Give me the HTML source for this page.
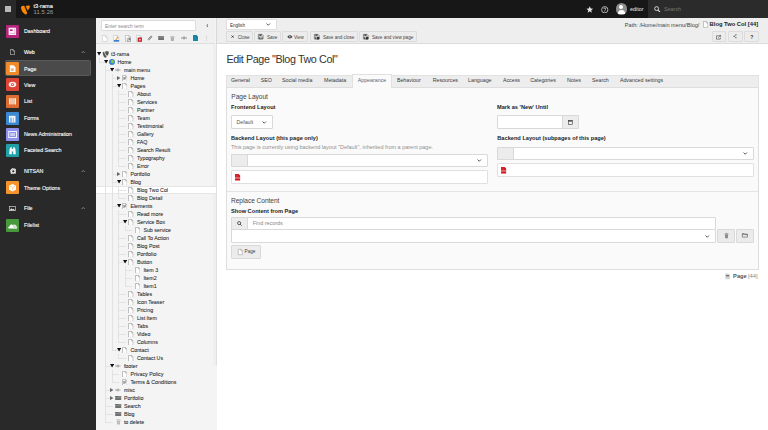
<!DOCTYPE html>
<html><head><meta charset="utf-8">
<style>
*{box-sizing:border-box;margin:0;padding:0}
html,body{width:768px;height:430px;overflow:hidden;background:#fff;font-family:"Liberation Sans",sans-serif;position:relative}
.a{position:absolute}
.t{position:absolute;white-space:nowrap;line-height:1}
#top{left:0;top:0;width:768px;height:18px;background:#171717}
#side{left:0;top:18px;width:96px;height:412px;background:#292929}
#tree{left:96px;top:18px;width:120px;height:412px;background:#f4f4f4}
#main{left:216px;top:18px;width:552px;height:412px;background:#fff}
.mi{position:absolute;left:6.3px;width:13px;height:13px;border-radius:1px}
.ml{position:absolute;left:24px;font-size:5.3px;color:#fff;white-space:nowrap;line-height:1;-webkit-text-stroke:0.1px #fff}
.row{position:absolute;left:0;width:119px;height:8px}
.tl{position:absolute;font-size:5.3px;color:#1a1a1a;white-space:nowrap;line-height:8px;top:0;-webkit-text-stroke:0.06px #333}
.tg{position:absolute;top:2.3px;width:0;height:0;border-left:2px solid transparent;border-right:2px solid transparent;border-top:3.2px solid #111}
.tgr{position:absolute;top:2.2px;width:0;height:0;border-top:1.8px solid transparent;border-bottom:1.8px solid transparent;border-left:2.8px solid #555}
.pi{position:absolute;top:1px;width:5px;height:6.2px;background:#fff;border:0.6px solid #8a8a8a}
.pi:after{content:"";position:absolute;right:-0.6px;top:-0.6px;width:1.8px;height:1.8px;background:#f3f3f3;border-left:0.6px solid #8a8a8a;border-bottom:0.6px solid #8a8a8a}
.btn{position:absolute;height:10.5px;background:#eaeaea;border:0.6px solid #c8c8c8;border-radius:1px}
.bt{position:absolute;font-size:4.6px;color:#333;white-space:nowrap;line-height:1}
.tab{position:absolute;font-size:5.3px;color:#333;white-space:nowrap;line-height:1;top:60.2px}
.lbl{position:absolute;font-size:5.65px;font-weight:bold;color:#222;white-space:nowrap;line-height:1}
.inp{position:absolute;background:#fff;border:0.6px solid #cfcfcf;border-radius:1px}
</style></head><body>

<svg width="0" height="0" style="position:absolute">
<defs>
<symbol id="pg" viewBox="0 0 10 13"><path d="M0.7 0.7 H6.3 L9.3 3.7 V12.3 H0.7 Z" fill="#fff" stroke="#8f8f8f" stroke-width="1.1"/><path d="M6.3 0.7 V3.7 H9.3" fill="none" stroke="#8f8f8f" stroke-width="0.9"/></symbol>
<symbol id="tgo" viewBox="0 0 8 8"><path d="M0.3 1.2 H7.7 L4 7.2 Z" fill="#111"/></symbol>
<symbol id="tgc" viewBox="0 0 8 8"><path d="M1.5 0.8 V7.2 L6.8 4 Z" fill="#555"/></symbol>
<symbol id="chev" viewBox="0 0 8 5"><path d="M1 1 L4 4 L7 1" fill="none" stroke="#333" stroke-width="1.3"/></symbol>
</defs></svg>
<!-- TOPBAR -->
<div id="top" class="a">
  <div class="a" style="left:0;top:0;width:16px;height:18px;background:#292929"></div>
  <div class="a" style="left:4.9px;top:5.9px;width:6px;height:6px;background:repeating-linear-gradient(#b8b8b8 0 1.1px,#8a8a8a 1.1px 1.5px)"></div>
  <svg class="a" style="left:20px;top:4.5px" width="11" height="10" viewBox="0 0 11 10"><path d="M0.9 2 Q1.6 0.8 4.2 0.7 L7.2 7.9 Q6.8 9.4 5.3 9.5 Q1.2 6.6 0.9 2 Z" fill="#ff8700"/><path d="M5.6 0.9 Q8.2 0.3 9.9 0.7 Q10.2 3.6 7.6 5.6 Z" fill="#ff8700"/></svg>
  <div class="t" style="left:33.5px;top:4.2px;font-size:5.6px;color:#fff;-webkit-text-stroke:0.12px #fff">t3-rama</div>
  <div class="t" style="left:33.5px;top:10.1px;font-size:5.8px;letter-spacing:0.15px;color:#a0a0a0">11.5.26</div>
  <svg class="a" style="left:586px;top:5.5px" width="7.5" height="7" viewBox="0 0 10 10"><path d="M5 0.3 L6.3 3.6 L9.8 3.8 L7.1 6 L8 9.6 L5 7.6 L2 9.6 L2.9 6 L0.2 3.8 L3.7 3.6 Z" fill="#e6e6e6"/></svg>
  <svg class="a" style="left:601px;top:5.5px" width="7.5" height="7.5" viewBox="0 0 10 10"><circle cx="5" cy="5" r="4.2" fill="none" stroke="#ddd" stroke-width="1"/><path d="M3.6 3.9 C3.6 2.3 6.4 2.3 6.4 3.9 C6.4 5 5 5 5 6.2" fill="none" stroke="#ddd" stroke-width="1"/><circle cx="5" cy="7.6" r="0.6" fill="#ddd"/></svg>
  <div class="a" style="left:615.5px;top:3.2px;width:11.6px;height:11.6px;border-radius:50%;background:#8d8d8d;overflow:hidden">
    <div class="a" style="left:3.9px;top:2.2px;width:3.8px;height:3.8px;border-radius:50%;background:#fff"></div>
    <div class="a" style="left:2.3px;top:6.6px;width:7px;height:4px;border-radius:3.5px 3.5px 0 0;background:#fff"></div>
  </div>
  <div class="t" style="left:630px;top:7.2px;font-size:5.4px;color:#e8e8e8">editor</div>
  <div class="a" style="left:648px;top:0;width:120px;height:18px;background:#2b2b2b"></div>
  <svg class="a" style="left:654px;top:6px" width="6.5" height="6.5" viewBox="0 0 10 10"><circle cx="4" cy="4" r="3" fill="none" stroke="#e0e0e0" stroke-width="1.4"/><path d="M6.2 6.2 L9.2 9.2" stroke="#e0e0e0" stroke-width="1.6"/></svg>
  <div class="t" style="left:664px;top:7.2px;font-size:5.4px;color:#777">Search</div>
</div>

<!-- SIDEBAR -->
<div id="side" class="a">
<div class="a" style="left:4.5px;top:42.00px;width:86.7px;height:15.8px;background:#4a4a4a;border:0.6px solid #5a5a5a;border-radius:1.5px"></div>
<div class="mi" style="top:6.80px;background:#b3267c"><svg class="a" style="left:0;top:0" width="13" height="13" viewBox="0 0 13 13"><rect x="2.6" y="2.7" width="7.5" height="7.3" fill="#fbeef6"/><rect x="4" y="4.4" width="2.6" height="1.6" fill="#b3267c"/><rect x="4" y="8" width="4.5" height="0.6" fill="#d98cbc"/><rect x="8.6" y="3.5" width="0.6" height="5.6" fill="#d98cbc"/></svg></div>
<div class="ml" style="top:11.40px">Dashboard</div>
<div class="mi" style="top:44.00px;background:#f08b2b"><svg class="a" style="left:0;top:0" width="13" height="13" viewBox="0 0 13 13"><path d="M3.8 3.2 H7.5 L9.5 5.2 V10 H3.8 Z" fill="#fff"/><rect x="4.8" y="6.3" width="3" height="2.8" fill="#f4b27a"/></svg></div>
<div class="ml" style="top:48.60px">Page</div>
<div class="mi" style="top:60.30px;background:#dc4437"><svg class="a" style="left:0;top:0" width="13" height="13" viewBox="0 0 13 13"><ellipse cx="6.5" cy="6.5" rx="3.8" ry="2.7" fill="#fbe9e7"/><circle cx="6.5" cy="6.5" r="1.5" fill="#e04a3e"/><circle cx="6.5" cy="6.5" r="0.6" fill="#fff"/></svg></div>
<div class="ml" style="top:64.90px">View</div>
<div class="mi" style="top:76.70px;background:#dc6c32"><svg class="a" style="left:0;top:0" width="13" height="13" viewBox="0 0 13 13"><rect x="3.3" y="3.2" width="6.6" height="6.2" fill="#f2c2a4"/><rect x="3.3" y="3.2" width="0.7" height="6.2" fill="#fff"/><rect x="9.2" y="3.2" width="0.7" height="6.2" fill="#fff"/></svg></div>
<div class="ml" style="top:81.30px">List</div>
<div class="mi" style="top:93.50px;background:#3d88d2"><svg class="a" style="left:0;top:0" width="13" height="13" viewBox="0 0 13 13"><path d="M3 3.8 H9.5 V10.5 H3 Z" fill="#eef5fc"/><rect x="4.5" y="5.6" width="1" height="4.9" fill="#3d8ad6"/><rect x="6.8" y="5.6" width="1.1" height="4.9" fill="#8fbde9"/></svg></div>
<div class="ml" style="top:98.10px">Forms</div>
<div class="mi" style="top:109.70px;background:#8e92ee"><svg class="a" style="left:0;top:0" width="13" height="13" viewBox="0 0 13 13"><rect x="2.7" y="3.5" width="7.8" height="6" fill="none" stroke="#f2f2fe" stroke-width="1"/><rect x="4.2" y="5" width="4.8" height="3" fill="#c9cbf7"/></svg></div>
<div class="ml" style="top:114.30px">News Administration</div>
<div class="mi" style="top:125.80px;background:#21a0a8"><svg class="a" style="left:0;top:0" width="13" height="13" viewBox="0 0 13 13"><path d="M3.6 5 L4.6 3.2 H5.8 V10.2 H3.2 Z M9.4 5 L8.4 3.2 H7.2 V10.2 H9.8 Z" fill="#fff"/><rect x="5.6" y="5" width="1.8" height="2.5" fill="#fff"/></svg></div>
<div class="ml" style="top:130.40px">Faceted Search</div>
<div class="mi" style="top:163.10px;background:#f4952b"><svg class="a" style="left:0;top:0" width="13" height="13" viewBox="0 0 13 13"><path d="M6.5 3 L10 4.8 V8.8 L6.5 10.5 L3 8.8 V4.8 Z" fill="#fff"/><path d="M3.6 5 L6.5 6.5 L9.4 5 M6.5 6.5 V9.6" fill="none" stroke="#f7c68d" stroke-width="0.7"/></svg></div>
<div class="ml" style="top:167.70px">Theme Options</div>
<div class="mi" style="top:200.50px;background:#4a983d"><svg class="a" style="left:0;top:0" width="13" height="13" viewBox="0 0 13 13"><path d="M3 9.6 C1.8 9.6 2 7.4 3.5 7.4 C3.8 5.4 6.2 5 7 6.2 C8 5.4 10.8 6 10.4 7.8 C11.6 8 11.4 9.6 10.3 9.6 Z" fill="#fff"/><path d="M7 6.2 V9.6 H10.3 C11.4 9.6 11.6 8 10.4 7.8 C10.8 6 8 5.4 7 6.2 Z" fill="#d2e6cc"/></svg></div>
<div class="ml" style="top:205.10px">Filelist</div>
<svg class="a" style="left:9.9px;top:31.10px" width="5" height="6.2" viewBox="0 0 10 12"><path d="M0.8 0.8 H6 L9.2 4 V11.2 H0.8 Z" fill="none" stroke="#e8e8e8" stroke-width="1.1"/><path d="M6 0.8 V4 H9.2" fill="none" stroke="#e8e8e8" stroke-width="0.9"/></svg>
<div class="ml" style="top:31.70px;color:#fff;-webkit-text-stroke:0.12px #fff">Web</div>
<svg class="a" style="left:81px;top:32.90px" width="4.4" height="2.6" viewBox="0 0 10 6"><path d="M1 5 L5 1 L9 5" fill="none" stroke="#bbb" stroke-width="1.4"/></svg>
<svg class="a" style="left:9.6px;top:149.70px" width="6.6" height="6.6" viewBox="0 0 10 10"><circle cx="5" cy="5" r="4.1" fill="none" stroke="#f4f4f4" stroke-width="1.8" stroke-dasharray="1.4 0.75"/><circle cx="5" cy="5" r="2.7" fill="none" stroke="#f4f4f4" stroke-width="1.9"/></svg>
<div class="ml" style="top:151.30px;color:#fff;-webkit-text-stroke:0.12px #fff">NITSAN</div>
<svg class="a" style="left:81px;top:151.70px" width="4.4" height="2.6" viewBox="0 0 10 6"><path d="M1 5 L5 1 L9 5" fill="none" stroke="#bbb" stroke-width="1.4"/></svg>
<svg class="a" style="left:9.3px;top:188.00px" width="6.6" height="5.2" viewBox="0 0 13 10"><rect x="0.6" y="0.6" width="11.8" height="8.8" fill="none" stroke="#e6e6e6" stroke-width="1.2"/><path d="M1 9 L4.8 4.2 L7.5 6.8 L9 5.5 L12 9 Z" fill="#e6e6e6"/></svg>
<div class="ml" style="top:188.30px;color:#fff;-webkit-text-stroke:0.12px #fff">File</div>
<svg class="a" style="left:81px;top:189.20px" width="4.4" height="2.6" viewBox="0 0 10 6"><path d="M1 5 L5 1 L9 5" fill="none" stroke="#bbb" stroke-width="1.4"/></svg>
</div>
<!-- TREE -->
<div id="tree" class="a">
<div class="a" style="left:0;top:0;width:119px;height:26px;background:#f0f0f0;border-bottom:1px solid #dedede"></div>
<div class="a" style="left:5px;top:2px;width:95px;height:11px;background:#fff;border:1px solid #dcdcdc;border-radius:1px"></div>
<div class="t" style="left:9px;top:7px;font-size:4.9px;color:#8a8a8a">Enter search term</div>
<svg class="a" style="left:109.6px;top:6.2px" width="2.6" height="3.2" viewBox="0 0 4 6"><path d="M3.4 0.6 L0.9 3 L3.4 5.4" fill="none" stroke="#333" stroke-width="1.4"/></svg>
<svg class="a" style="left:6.10px;top:16.50px" width="5.6" height="7.1" viewBox="0 0 10 12"><path d="M0.7 0.7 H6.3 L9.3 3.7 V11.3 H0.7 Z" fill="#fff" stroke="#b8b8b8" stroke-width="0.9"/><path d="M6.3 0.7 V3.7 H9.3" fill="none" stroke="#b8b8b8" stroke-width="0.8"/></svg>
<svg class="a" style="left:17.30px;top:16.50px" width="6.4" height="7.1" viewBox="0 0 10 12"><path d="M0.7 0.7 H6.3 L9.3 3.7 V11.3 H0.7 Z" fill="#fff" stroke="#b8b8b8" stroke-width="0.9"/><path d="M6.3 0.7 V3.7 H9.3" fill="none" stroke="#b8b8b8" stroke-width="0.8"/><path d="M3 8 L7.5 2.5 L9 3.8 L4.5 9.3 Z" fill="#e3a530"/><rect x="1" y="8.6" width="9" height="2.6" fill="#2d76d2"/></svg>
<svg class="a" style="left:28.60px;top:16.50px" width="6.2" height="7.1" viewBox="0 0 10 12"><path d="M0.7 0.7 H6.3 L9.3 3.7 V11.3 H0.7 Z" fill="#fff" stroke="#9a9a9a" stroke-width="0.9"/><path d="M6.3 0.7 V3.7 H9.3" fill="none" stroke="#9a9a9a" stroke-width="0.8"/><rect x="3.6" y="5.2" width="5.4" height="5.4" rx="0.6" fill="#fff" stroke="#666" stroke-width="0.8"/><path d="M4.8 9.4 L7.6 6.6 M5.6 6.4 H7.8 V8.6" fill="none" stroke="#333" stroke-width="0.9"/></svg>
<svg class="a" style="left:40.00px;top:16.50px" width="6.2" height="7.1" viewBox="0 0 10 12"><path d="M0.7 0.7 H6.3 L9.3 3.7 V11.3 H0.7 Z" fill="#fff" stroke="#a8c0c0" stroke-width="0.9"/><path d="M6.3 0.7 V3.7 H9.3" fill="none" stroke="#a8c0c0" stroke-width="0.8"/><rect x="2.6" y="4.2" width="7.2" height="7.3" fill="#cc1d25"/><rect x="5.2" y="6.6" width="2.2" height="2.6" fill="#fff"/></svg>
<svg class="a" style="left:51.00px;top:17.10px" width="6" height="6" viewBox="0 0 10 10"><path d="M2 8 L8 2" stroke="#777" stroke-width="3"/><path d="M2.2 7.8 L7.8 2.2" stroke="#f0f0f0" stroke-width="1.2" stroke-dasharray="1.6 0.8"/></svg>
<svg class="a" style="left:62.00px;top:17.80px" width="6.2" height="4.6" viewBox="0 0 10 8"><rect x="0" y="0" width="10" height="8" fill="#707070"/><rect x="0" y="2.2" width="10" height="0.8" fill="#9a9a9a"/><rect x="4" y="0" width="6" height="1.6" fill="#888"/></svg>
<svg class="a" style="left:73.80px;top:17.70px" width="4.8" height="5" viewBox="0 0 10 10"><rect x="0.3" y="1" width="9.4" height="1.3" fill="#aaa"/><rect x="3.5" y="0" width="3" height="1.2" fill="#aaa"/><path d="M1.3 2.6 H8.7 L8 10 H2 Z" fill="#b0b0b0"/></svg>
<svg class="a" style="left:85.00px;top:18.30px" width="6" height="3.6" viewBox="0 0 10 6"><rect x="0" y="2.6" width="10" height="1.6" fill="#8a8a8a"/><rect x="4.3" y="0" width="1.5" height="6" fill="#8a8a8a"/></svg>
<svg class="a" style="left:96.70px;top:16.80px" width="5.3" height="6.6" viewBox="0 0 10 12"><path d="M0 0 H6.5 L10 3.5 V12 H0 Z" fill="#1689a6"/><path d="M6.5 0 V3.5 H10" fill="none" stroke="#0c5f75" stroke-width="0.8"/></svg>
<svg class="a" style="left:110.40px;top:17.50px" width="1.2" height="5.6" viewBox="0 0 2 10"><circle cx="1" cy="1" r="0.8" fill="#999"/><circle cx="1" cy="5" r="0.8" fill="#999"/><circle cx="1" cy="9" r="0.8" fill="#999"/></svg>
<div class="a" style="left:0;top:167.80px;width:119px;height:8.4px;background:#fff;border-top:0.5px solid #e6e6e6;border-bottom:0.5px solid #e6e6e6"></div>
<div class="a" style="left:2.85px;top:44.00px;width:7.20px;height:0.6px;background:#e2e2e2"></div>
<div class="a" style="left:2.85px;top:39.50px;width:0.6px;height:4.50px;background:#e2e2e2"></div>
<div class="a" style="left:9.35px;top:52.00px;width:7.20px;height:0.6px;background:#e2e2e2"></div>
<div class="a" style="left:9.35px;top:47.50px;width:0.6px;height:4.50px;background:#e2e2e2"></div>
<div class="a" style="left:15.85px;top:60.00px;width:7.20px;height:0.6px;background:#e2e2e2"></div>
<div class="a" style="left:15.85px;top:55.50px;width:0.6px;height:4.50px;background:#e2e2e2"></div>
<div class="a" style="left:15.85px;top:68.00px;width:7.20px;height:0.6px;background:#e2e2e2"></div>
<div class="a" style="left:15.85px;top:55.50px;width:0.6px;height:12.50px;background:#e2e2e2"></div>
<div class="a" style="left:22.35px;top:76.00px;width:7.20px;height:0.6px;background:#e2e2e2"></div>
<div class="a" style="left:22.35px;top:71.50px;width:0.6px;height:4.50px;background:#e2e2e2"></div>
<div class="a" style="left:22.35px;top:84.00px;width:7.20px;height:0.6px;background:#e2e2e2"></div>
<div class="a" style="left:22.35px;top:71.50px;width:0.6px;height:12.50px;background:#e2e2e2"></div>
<div class="a" style="left:22.35px;top:92.00px;width:7.20px;height:0.6px;background:#e2e2e2"></div>
<div class="a" style="left:22.35px;top:71.50px;width:0.6px;height:20.50px;background:#e2e2e2"></div>
<div class="a" style="left:22.35px;top:100.00px;width:7.20px;height:0.6px;background:#e2e2e2"></div>
<div class="a" style="left:22.35px;top:71.50px;width:0.6px;height:28.50px;background:#e2e2e2"></div>
<div class="a" style="left:22.35px;top:108.00px;width:7.20px;height:0.6px;background:#e2e2e2"></div>
<div class="a" style="left:22.35px;top:71.50px;width:0.6px;height:36.50px;background:#e2e2e2"></div>
<div class="a" style="left:22.35px;top:116.00px;width:7.20px;height:0.6px;background:#e2e2e2"></div>
<div class="a" style="left:22.35px;top:71.50px;width:0.6px;height:44.50px;background:#e2e2e2"></div>
<div class="a" style="left:22.35px;top:124.00px;width:7.20px;height:0.6px;background:#e2e2e2"></div>
<div class="a" style="left:22.35px;top:71.50px;width:0.6px;height:52.50px;background:#e2e2e2"></div>
<div class="a" style="left:22.35px;top:132.00px;width:7.20px;height:0.6px;background:#e2e2e2"></div>
<div class="a" style="left:22.35px;top:71.50px;width:0.6px;height:60.50px;background:#e2e2e2"></div>
<div class="a" style="left:22.35px;top:140.00px;width:7.20px;height:0.6px;background:#e2e2e2"></div>
<div class="a" style="left:22.35px;top:71.50px;width:0.6px;height:68.50px;background:#e2e2e2"></div>
<div class="a" style="left:22.35px;top:148.00px;width:7.20px;height:0.6px;background:#e2e2e2"></div>
<div class="a" style="left:22.35px;top:71.50px;width:0.6px;height:76.50px;background:#e2e2e2"></div>
<div class="a" style="left:15.85px;top:156.00px;width:7.20px;height:0.6px;background:#e2e2e2"></div>
<div class="a" style="left:15.85px;top:55.50px;width:0.6px;height:100.50px;background:#e2e2e2"></div>
<div class="a" style="left:15.85px;top:164.00px;width:7.20px;height:0.6px;background:#e2e2e2"></div>
<div class="a" style="left:15.85px;top:55.50px;width:0.6px;height:108.50px;background:#e2e2e2"></div>
<div class="a" style="left:22.35px;top:172.00px;width:7.20px;height:0.6px;background:#e2e2e2"></div>
<div class="a" style="left:22.35px;top:167.50px;width:0.6px;height:4.50px;background:#e2e2e2"></div>
<div class="a" style="left:22.35px;top:180.00px;width:7.20px;height:0.6px;background:#e2e2e2"></div>
<div class="a" style="left:22.35px;top:167.50px;width:0.6px;height:12.50px;background:#e2e2e2"></div>
<div class="a" style="left:15.85px;top:188.00px;width:7.20px;height:0.6px;background:#e2e2e2"></div>
<div class="a" style="left:15.85px;top:55.50px;width:0.6px;height:132.50px;background:#e2e2e2"></div>
<div class="a" style="left:22.35px;top:196.00px;width:7.20px;height:0.6px;background:#e2e2e2"></div>
<div class="a" style="left:22.35px;top:191.50px;width:0.6px;height:4.50px;background:#e2e2e2"></div>
<div class="a" style="left:22.35px;top:204.00px;width:7.20px;height:0.6px;background:#e2e2e2"></div>
<div class="a" style="left:22.35px;top:191.50px;width:0.6px;height:12.50px;background:#e2e2e2"></div>
<div class="a" style="left:28.85px;top:212.00px;width:7.20px;height:0.6px;background:#e2e2e2"></div>
<div class="a" style="left:28.85px;top:207.50px;width:0.6px;height:4.50px;background:#e2e2e2"></div>
<div class="a" style="left:22.35px;top:220.00px;width:7.20px;height:0.6px;background:#e2e2e2"></div>
<div class="a" style="left:22.35px;top:191.50px;width:0.6px;height:28.50px;background:#e2e2e2"></div>
<div class="a" style="left:22.35px;top:228.00px;width:7.20px;height:0.6px;background:#e2e2e2"></div>
<div class="a" style="left:22.35px;top:191.50px;width:0.6px;height:36.50px;background:#e2e2e2"></div>
<div class="a" style="left:22.35px;top:236.00px;width:7.20px;height:0.6px;background:#e2e2e2"></div>
<div class="a" style="left:22.35px;top:191.50px;width:0.6px;height:44.50px;background:#e2e2e2"></div>
<div class="a" style="left:22.35px;top:244.00px;width:7.20px;height:0.6px;background:#e2e2e2"></div>
<div class="a" style="left:22.35px;top:191.50px;width:0.6px;height:52.50px;background:#e2e2e2"></div>
<div class="a" style="left:28.85px;top:252.00px;width:7.20px;height:0.6px;background:#e2e2e2"></div>
<div class="a" style="left:28.85px;top:247.50px;width:0.6px;height:4.50px;background:#e2e2e2"></div>
<div class="a" style="left:28.85px;top:260.00px;width:7.20px;height:0.6px;background:#e2e2e2"></div>
<div class="a" style="left:28.85px;top:247.50px;width:0.6px;height:12.50px;background:#e2e2e2"></div>
<div class="a" style="left:28.85px;top:268.00px;width:7.20px;height:0.6px;background:#e2e2e2"></div>
<div class="a" style="left:28.85px;top:247.50px;width:0.6px;height:20.50px;background:#e2e2e2"></div>
<div class="a" style="left:22.35px;top:276.00px;width:7.20px;height:0.6px;background:#e2e2e2"></div>
<div class="a" style="left:22.35px;top:191.50px;width:0.6px;height:84.50px;background:#e2e2e2"></div>
<div class="a" style="left:22.35px;top:284.00px;width:7.20px;height:0.6px;background:#e2e2e2"></div>
<div class="a" style="left:22.35px;top:191.50px;width:0.6px;height:92.50px;background:#e2e2e2"></div>
<div class="a" style="left:22.35px;top:292.00px;width:7.20px;height:0.6px;background:#e2e2e2"></div>
<div class="a" style="left:22.35px;top:191.50px;width:0.6px;height:100.50px;background:#e2e2e2"></div>
<div class="a" style="left:22.35px;top:300.00px;width:7.20px;height:0.6px;background:#e2e2e2"></div>
<div class="a" style="left:22.35px;top:191.50px;width:0.6px;height:108.50px;background:#e2e2e2"></div>
<div class="a" style="left:22.35px;top:308.00px;width:7.20px;height:0.6px;background:#e2e2e2"></div>
<div class="a" style="left:22.35px;top:191.50px;width:0.6px;height:116.50px;background:#e2e2e2"></div>
<div class="a" style="left:22.35px;top:316.00px;width:7.20px;height:0.6px;background:#e2e2e2"></div>
<div class="a" style="left:22.35px;top:191.50px;width:0.6px;height:124.50px;background:#e2e2e2"></div>
<div class="a" style="left:22.35px;top:324.00px;width:7.20px;height:0.6px;background:#e2e2e2"></div>
<div class="a" style="left:22.35px;top:191.50px;width:0.6px;height:132.50px;background:#e2e2e2"></div>
<div class="a" style="left:15.85px;top:332.00px;width:7.20px;height:0.6px;background:#e2e2e2"></div>
<div class="a" style="left:15.85px;top:55.50px;width:0.6px;height:276.50px;background:#e2e2e2"></div>
<div class="a" style="left:22.35px;top:340.00px;width:7.20px;height:0.6px;background:#e2e2e2"></div>
<div class="a" style="left:22.35px;top:335.50px;width:0.6px;height:4.50px;background:#e2e2e2"></div>
<div class="a" style="left:9.35px;top:348.00px;width:7.20px;height:0.6px;background:#e2e2e2"></div>
<div class="a" style="left:9.35px;top:47.50px;width:0.6px;height:300.50px;background:#e2e2e2"></div>
<div class="a" style="left:15.85px;top:356.00px;width:7.20px;height:0.6px;background:#e2e2e2"></div>
<div class="a" style="left:15.85px;top:351.50px;width:0.6px;height:4.50px;background:#e2e2e2"></div>
<div class="a" style="left:15.85px;top:364.00px;width:7.20px;height:0.6px;background:#e2e2e2"></div>
<div class="a" style="left:15.85px;top:351.50px;width:0.6px;height:12.50px;background:#e2e2e2"></div>
<div class="a" style="left:9.35px;top:372.00px;width:7.20px;height:0.6px;background:#e2e2e2"></div>
<div class="a" style="left:9.35px;top:47.50px;width:0.6px;height:324.50px;background:#e2e2e2"></div>
<div class="a" style="left:9.35px;top:380.00px;width:7.20px;height:0.6px;background:#e2e2e2"></div>
<div class="a" style="left:9.35px;top:47.50px;width:0.6px;height:332.50px;background:#e2e2e2"></div>
<div class="a" style="left:9.35px;top:388.00px;width:7.20px;height:0.6px;background:#e2e2e2"></div>
<div class="a" style="left:9.35px;top:47.50px;width:0.6px;height:340.50px;background:#e2e2e2"></div>
<div class="a" style="left:9.35px;top:396.00px;width:7.20px;height:0.6px;background:#e2e2e2"></div>
<div class="a" style="left:9.35px;top:47.50px;width:0.6px;height:348.50px;background:#e2e2e2"></div>
<div class="a" style="left:9.35px;top:404.00px;width:7.20px;height:0.6px;background:#e2e2e2"></div>
<div class="a" style="left:9.35px;top:47.50px;width:0.6px;height:356.50px;background:#e2e2e2"></div>
<svg class="a" style="left:1.15px;top:34.40px" width="4.2" height="3.6" viewBox="0 0 4.2 3.6"><path d="M0 0 H4.2 L2.1 3.6 Z" fill="#111"/></svg>
<svg class="a" style="left:6.10px;top:32.50px" width="7" height="7" viewBox="0 0 10 10"><path d="M1 2 C1 5 3 9.5 5 9.5 C6 9.5 6.5 8.8 6.8 8.2 C5.8 7.6 3.6 4.2 3 1.2 C2.2 1.3 1.4 1.6 1 2 Z M4 1 C4.6 3.4 6 6.6 7 6.8 C8.4 6.8 9.6 4.4 9.6 2 C9.6 0.8 9.2 0.4 8.4 0.4 C7.2 0.4 5.4 0.6 4 1 Z" fill="#555"/></svg>
<div class="tl" style="left:14.90px;top:32.40px">t3-rama</div>
<svg class="a" style="left:7.65px;top:42.40px" width="4.2" height="3.6" viewBox="0 0 4.2 3.6"><path d="M0 0 H4.2 L2.1 3.6 Z" fill="#111"/></svg>
<div class="a" style="left:12.90px;top:40.90px;width:6.3px;height:6.3px;border-radius:50%;background:#3b86c9"></div><div class="a" style="left:14.90px;top:41.50px;width:3px;height:3.6px;border-radius:50% 50% 40% 40%;background:#8cc63f"></div>
<div class="tl" style="left:21.40px;top:40.40px">Home</div>
<svg class="a" style="left:14.15px;top:50.40px" width="4.2" height="3.6" viewBox="0 0 4.2 3.6"><path d="M0 0 H4.2 L2.1 3.6 Z" fill="#111"/></svg>
<svg class="a" style="left:19.20px;top:49.80px" width="5.6" height="4" viewBox="0 0 10 7"><path d="M0 3.5 H10" stroke="#8c8c8c" stroke-width="1.3"/><path d="M4 1 V6 M6 1 V6" stroke="#8c8c8c" stroke-width="1"/></svg>
<div class="tl" style="left:27.90px;top:48.40px">main menu</div>
<svg class="a" style="left:20.70px;top:57.90px" width="3.4" height="4.2" viewBox="0 0 3.4 4.2"><path d="M0 0 V4.2 L3.4 2.1 Z" fill="#6a6a6a"/></svg>
<svg class="a" style="left:25.60px;top:56.70px" width="5.6" height="6.8"><use href="#pg"/></svg><svg class="a" style="left:27.00px;top:59.30px" width="3" height="3" viewBox="0 0 6 6"><rect x="0.5" y="0.5" width="5" height="5" fill="#fff" stroke="#777" stroke-width="0.9"/><path d="M1.8 4.2 L4.2 1.8 M2.6 1.8 H4.2 V3.4" fill="none" stroke="#444" stroke-width="0.9"/></svg>
<div class="tl" style="left:34.40px;top:56.40px">Home</div>
<svg class="a" style="left:20.65px;top:66.40px" width="4.2" height="3.6" viewBox="0 0 4.2 3.6"><path d="M0 0 H4.2 L2.1 3.6 Z" fill="#111"/></svg>
<svg class="a" style="left:25.60px;top:64.70px" width="5.6" height="6.8"><use href="#pg"/></svg>
<div class="tl" style="left:34.40px;top:64.40px">Pages</div>
<svg class="a" style="left:32.10px;top:72.70px" width="5.6" height="6.8"><use href="#pg"/></svg>
<div class="tl" style="left:40.90px;top:72.40px">About</div>
<svg class="a" style="left:32.10px;top:80.70px" width="5.6" height="6.8"><use href="#pg"/></svg>
<div class="tl" style="left:40.90px;top:80.40px">Services</div>
<svg class="a" style="left:32.10px;top:88.70px" width="5.6" height="6.8"><use href="#pg"/></svg>
<div class="tl" style="left:40.90px;top:88.40px">Partner</div>
<svg class="a" style="left:32.10px;top:96.70px" width="5.6" height="6.8"><use href="#pg"/></svg>
<div class="tl" style="left:40.90px;top:96.40px">Team</div>
<svg class="a" style="left:32.10px;top:104.70px" width="5.6" height="6.8"><use href="#pg"/></svg>
<div class="tl" style="left:40.90px;top:104.40px">Testimonial</div>
<svg class="a" style="left:32.10px;top:112.70px" width="5.6" height="6.8"><use href="#pg"/></svg>
<div class="tl" style="left:40.90px;top:112.40px">Gallery</div>
<svg class="a" style="left:32.10px;top:120.70px" width="5.6" height="6.8"><use href="#pg"/></svg>
<div class="tl" style="left:40.90px;top:120.40px">FAQ</div>
<svg class="a" style="left:32.10px;top:128.70px" width="5.6" height="6.8"><use href="#pg"/></svg>
<div class="tl" style="left:40.90px;top:128.40px">Search Result</div>
<svg class="a" style="left:32.10px;top:136.70px" width="5.6" height="6.8"><use href="#pg"/></svg>
<div class="tl" style="left:40.90px;top:136.40px">Typography</div>
<svg class="a" style="left:32.10px;top:144.70px" width="5.6" height="6.8"><use href="#pg"/></svg>
<div class="tl" style="left:40.90px;top:144.40px">Error</div>
<svg class="a" style="left:20.70px;top:153.90px" width="3.4" height="4.2" viewBox="0 0 3.4 4.2"><path d="M0 0 V4.2 L3.4 2.1 Z" fill="#6a6a6a"/></svg>
<svg class="a" style="left:25.60px;top:152.70px" width="5.6" height="6.8"><use href="#pg"/></svg>
<div class="tl" style="left:34.40px;top:152.40px">Portfolio</div>
<svg class="a" style="left:20.65px;top:162.40px" width="4.2" height="3.6" viewBox="0 0 4.2 3.6"><path d="M0 0 H4.2 L2.1 3.6 Z" fill="#111"/></svg>
<svg class="a" style="left:25.60px;top:160.70px" width="5.6" height="6.8"><use href="#pg"/></svg>
<div class="tl" style="left:34.40px;top:160.40px">Blog</div>
<svg class="a" style="left:32.10px;top:168.70px" width="5.6" height="6.8"><use href="#pg"/></svg>
<div class="tl" style="left:40.90px;top:168.40px">Blog Two Col</div>
<svg class="a" style="left:32.10px;top:176.70px" width="5.6" height="6.8"><use href="#pg"/></svg>
<div class="tl" style="left:40.90px;top:176.40px">Blog Detail</div>
<svg class="a" style="left:20.65px;top:186.40px" width="4.2" height="3.6" viewBox="0 0 4.2 3.6"><path d="M0 0 H4.2 L2.1 3.6 Z" fill="#111"/></svg>
<svg class="a" style="left:25.60px;top:184.70px" width="5.6" height="6.8"><use href="#pg"/></svg><svg class="a" style="left:27.00px;top:187.30px" width="3" height="3" viewBox="0 0 6 6"><rect x="0.5" y="0.5" width="5" height="5" fill="#fff" stroke="#777" stroke-width="0.9"/><path d="M1.8 4.2 L4.2 1.8 M2.6 1.8 H4.2 V3.4" fill="none" stroke="#444" stroke-width="0.9"/></svg>
<div class="tl" style="left:34.40px;top:184.40px">Elements</div>
<svg class="a" style="left:32.10px;top:192.70px" width="5.6" height="6.8"><use href="#pg"/></svg>
<div class="tl" style="left:40.90px;top:192.40px">Read more</div>
<svg class="a" style="left:27.15px;top:202.40px" width="4.2" height="3.6" viewBox="0 0 4.2 3.6"><path d="M0 0 H4.2 L2.1 3.6 Z" fill="#111"/></svg>
<svg class="a" style="left:32.10px;top:200.70px" width="5.6" height="6.8"><use href="#pg"/></svg>
<div class="tl" style="left:40.90px;top:200.40px">Service Box</div>
<svg class="a" style="left:38.60px;top:208.70px" width="5.6" height="6.8"><use href="#pg"/></svg>
<div class="tl" style="left:47.40px;top:208.40px">Sub service</div>
<svg class="a" style="left:32.10px;top:216.70px" width="5.6" height="6.8"><use href="#pg"/></svg>
<div class="tl" style="left:40.90px;top:216.40px">Call To Action</div>
<svg class="a" style="left:32.10px;top:224.70px" width="5.6" height="6.8"><use href="#pg"/></svg>
<div class="tl" style="left:40.90px;top:224.40px">Blog Post</div>
<svg class="a" style="left:32.10px;top:232.70px" width="5.6" height="6.8"><use href="#pg"/></svg>
<div class="tl" style="left:40.90px;top:232.40px">Portfolio</div>
<svg class="a" style="left:27.15px;top:242.40px" width="4.2" height="3.6" viewBox="0 0 4.2 3.6"><path d="M0 0 H4.2 L2.1 3.6 Z" fill="#111"/></svg>
<svg class="a" style="left:32.10px;top:240.70px" width="5.6" height="6.8"><use href="#pg"/></svg>
<div class="tl" style="left:40.90px;top:240.40px">Button</div>
<svg class="a" style="left:38.60px;top:248.70px" width="5.6" height="6.8"><use href="#pg"/></svg>
<div class="tl" style="left:47.40px;top:248.40px">Item 3</div>
<svg class="a" style="left:38.60px;top:256.70px" width="5.6" height="6.8"><use href="#pg"/></svg>
<div class="tl" style="left:47.40px;top:256.40px">Item2</div>
<svg class="a" style="left:38.60px;top:264.70px" width="5.6" height="6.8"><use href="#pg"/></svg>
<div class="tl" style="left:47.40px;top:264.40px">Item1</div>
<svg class="a" style="left:32.10px;top:272.70px" width="5.6" height="6.8"><use href="#pg"/></svg>
<div class="tl" style="left:40.90px;top:272.40px">Tables</div>
<svg class="a" style="left:32.10px;top:280.70px" width="5.6" height="6.8"><use href="#pg"/></svg>
<div class="tl" style="left:40.90px;top:280.40px">Icon Teaser</div>
<svg class="a" style="left:32.10px;top:288.70px" width="5.6" height="6.8"><use href="#pg"/></svg>
<div class="tl" style="left:40.90px;top:288.40px">Pricing</div>
<svg class="a" style="left:32.10px;top:296.70px" width="5.6" height="6.8"><use href="#pg"/></svg>
<div class="tl" style="left:40.90px;top:296.40px">List Item</div>
<svg class="a" style="left:32.10px;top:304.70px" width="5.6" height="6.8"><use href="#pg"/></svg>
<div class="tl" style="left:40.90px;top:304.40px">Tabs</div>
<svg class="a" style="left:32.10px;top:312.70px" width="5.6" height="6.8"><use href="#pg"/></svg>
<div class="tl" style="left:40.90px;top:312.40px">Video</div>
<svg class="a" style="left:32.10px;top:320.70px" width="5.6" height="6.8"><use href="#pg"/></svg>
<div class="tl" style="left:40.90px;top:320.40px">Columns</div>
<svg class="a" style="left:20.65px;top:330.40px" width="4.2" height="3.6" viewBox="0 0 4.2 3.6"><path d="M0 0 H4.2 L2.1 3.6 Z" fill="#111"/></svg>
<svg class="a" style="left:25.60px;top:328.70px" width="5.6" height="6.8"><use href="#pg"/></svg>
<div class="tl" style="left:34.40px;top:328.40px">Contact</div>
<svg class="a" style="left:32.10px;top:336.70px" width="5.6" height="6.8"><use href="#pg"/></svg>
<div class="tl" style="left:40.90px;top:336.40px">Contact Us</div>
<svg class="a" style="left:14.15px;top:346.40px" width="4.2" height="3.6" viewBox="0 0 4.2 3.6"><path d="M0 0 H4.2 L2.1 3.6 Z" fill="#111"/></svg>
<svg class="a" style="left:19.20px;top:345.80px" width="5.6" height="4" viewBox="0 0 10 7"><path d="M0 3.5 H10" stroke="#8c8c8c" stroke-width="1.3"/><path d="M4 1 V6 M6 1 V6" stroke="#8c8c8c" stroke-width="1"/></svg>
<div class="tl" style="left:27.90px;top:344.40px">footer</div>
<svg class="a" style="left:25.60px;top:352.70px" width="5.6" height="6.8"><use href="#pg"/></svg>
<div class="tl" style="left:34.40px;top:352.40px">Privacy Policy</div>
<svg class="a" style="left:25.60px;top:360.70px" width="5.6" height="6.8"><use href="#pg"/></svg><svg class="a" style="left:27.00px;top:363.30px" width="3" height="3" viewBox="0 0 6 6"><rect x="0.5" y="0.5" width="5" height="5" fill="#fff" stroke="#777" stroke-width="0.9"/><path d="M1.8 4.2 L4.2 1.8 M2.6 1.8 H4.2 V3.4" fill="none" stroke="#444" stroke-width="0.9"/></svg>
<div class="tl" style="left:34.40px;top:360.40px">Terms &amp; Conditions</div>
<svg class="a" style="left:14.20px;top:369.90px" width="3.4" height="4.2" viewBox="0 0 3.4 4.2"><path d="M0 0 V4.2 L3.4 2.1 Z" fill="#6a6a6a"/></svg>
<svg class="a" style="left:19.20px;top:369.80px" width="5.6" height="4" viewBox="0 0 10 7"><path d="M0 3.5 H10" stroke="#8c8c8c" stroke-width="1.3"/><path d="M4 1 V6 M6 1 V6" stroke="#8c8c8c" stroke-width="1"/></svg>
<div class="tl" style="left:27.90px;top:368.40px">misc</div>
<svg class="a" style="left:14.20px;top:377.90px" width="3.4" height="4.2" viewBox="0 0 3.4 4.2"><path d="M0 0 V4.2 L3.4 2.1 Z" fill="#6a6a6a"/></svg>
<svg class="a" style="left:19.30px;top:377.90px" width="6.4" height="4.2" viewBox="0 0 10 7"><rect x="0" y="0" width="10" height="7" fill="#666"/><rect x="0" y="2.3" width="10" height="0.9" fill="#aaa"/><rect x="0" y="4.6" width="10" height="0.8" fill="#999"/><rect x="5" y="0" width="5" height="1.4" fill="#888"/></svg>
<div class="tl" style="left:27.90px;top:376.40px">Portfolio</div>
<svg class="a" style="left:19.30px;top:385.90px" width="6.4" height="4.2" viewBox="0 0 10 7"><rect x="0" y="0" width="10" height="7" fill="#666"/><rect x="0" y="2.3" width="10" height="0.9" fill="#aaa"/><rect x="0" y="4.6" width="10" height="0.8" fill="#999"/><rect x="5" y="0" width="5" height="1.4" fill="#888"/></svg>
<div class="tl" style="left:27.90px;top:384.40px">Search</div>
<svg class="a" style="left:19.30px;top:393.90px" width="6.4" height="4.2" viewBox="0 0 10 7"><rect x="0" y="0" width="10" height="7" fill="#666"/><rect x="0" y="2.3" width="10" height="0.9" fill="#aaa"/><rect x="0" y="4.6" width="10" height="0.8" fill="#999"/><rect x="5" y="0" width="5" height="1.4" fill="#888"/></svg>
<div class="tl" style="left:27.90px;top:392.40px">Blog</div>
<svg class="a" style="left:20.10px;top:401.20px" width="5" height="5.8" viewBox="0 0 10 11.5"><path d="M0.5 2.2 H9.5 M3.5 2 V0.6 H6.5 V2" fill="none" stroke="#b5b5b5" stroke-width="1.2"/><path d="M1.5 3.4 H8.5 L7.8 11.2 H2.2 Z" fill="#bdbdbd"/></svg>
<div class="tl" style="left:27.90px;top:400.40px">to delete</div>
</div>
<!-- MAIN -->
<div id="main" class="a">
<div class="a" style="left:0px;top:0px;width:552px;height:26px;background:#eeeeee;border-bottom:1px solid #dcdcdc"></div>
<div class="a" style="left:10px;top:1px;width:51px;height:11px;background:#fff;border:1px solid #dedede;border-radius:1px"></div>
<div class="t" style="left:13.90px;top:6.00px;font-size:4.6px;color:#333">English</div>
<svg class="a" style="left:49.60px;top:5.40px;overflow:visible" width="4.6" height="2.8" viewBox="0 0 8 5"><path d="M1 1 L4 4 L7 1" fill="none" stroke="#333" stroke-width="1.5"/></svg>
<div class="a" style="left:10px;top:13px;width:27px;height:11px;background:#ececec;border:1px solid #dcdcdc;border-radius:1px"></div>
<svg class="a" style="left:14.80px;top:17.20px;overflow:visible" width="3.2" height="3.2" viewBox="0 0 6 6"><path d="M1 1 L5 5 M5 1 L1 5" stroke="#222" stroke-width="1.5"/></svg>
<div class="t" style="left:21.80px;top:18.10px;font-size:4.6px;color:#444">Close</div>
<div class="a" style="left:38px;top:13px;width:27px;height:11px;background:#ececec;border:1px solid #dcdcdc;border-radius:1px"></div>
<svg class="a" style="left:41.90px;top:16.10px;overflow:visible" width="5.4" height="5.4" viewBox="0 0 10 10"><path d="M0.7 0.7 H7.5 L9.3 2.5 V9.3 H0.7 Z" fill="none" stroke="#333" stroke-width="1"/><rect x="2.5" y="1" width="4" height="2.4" fill="#333"/><rect x="2.3" y="5.6" width="5.4" height="3.4" fill="none" stroke="#333" stroke-width="0.9"/></svg>
<div class="t" style="left:50.90px;top:18.10px;font-size:4.6px;color:#444">Save</div>
<div class="a" style="left:66px;top:13px;width:26px;height:11px;background:#ececec;border:1px solid #dcdcdc;border-radius:1px"></div>
<svg class="a" style="left:70.60px;top:16.60px;overflow:visible" width="5.8" height="3.8" viewBox="0 0 10 6.5"><path d="M0.5 3.2 C3 -0.6 7 -0.6 9.5 3.2 C7 7 3 7 0.5 3.2 Z" fill="#444"/><circle cx="5" cy="3.2" r="1.3" fill="#ddd"/></svg>
<div class="t" style="left:77.90px;top:18.10px;font-size:4.6px;color:#444">View</div>
<div class="a" style="left:94px;top:13px;width:48px;height:11px;background:#ececec;border:1px solid #dcdcdc;border-radius:1px"></div>
<svg class="a" style="left:97.90px;top:16.10px;overflow:visible" width="5.4" height="5.4" viewBox="0 0 10 10"><path d="M0.7 0.7 H7.5 L9.3 2.5 V9.3 H0.7 Z" fill="none" stroke="#333" stroke-width="1"/><rect x="2.5" y="1" width="4" height="2.4" fill="#333"/><rect x="2.3" y="5.6" width="5.4" height="3.4" fill="none" stroke="#333" stroke-width="0.9"/><rect x="5.5" y="5.5" width="4.5" height="4.5" fill="#333"/></svg>
<div class="t" style="left:106.90px;top:18.10px;font-size:4.6px;color:#444">Save and close</div>
<div class="a" style="left:143px;top:13px;width:58px;height:11px;background:#ececec;border:1px solid #dcdcdc;border-radius:1px"></div>
<svg class="a" style="left:146.90px;top:16.10px;overflow:visible" width="5.4" height="5.4" viewBox="0 0 10 10"><path d="M0.7 0.7 H7.5 L9.3 2.5 V9.3 H0.7 Z" fill="none" stroke="#333" stroke-width="1"/><rect x="2.5" y="1" width="4" height="2.4" fill="#333"/><rect x="2.3" y="5.6" width="5.4" height="3.4" fill="none" stroke="#333" stroke-width="0.9"/><rect x="5.5" y="5.5" width="4.5" height="4.5" fill="#333"/></svg>
<div class="t" style="left:155.90px;top:18.10px;font-size:4.6px;color:#444">Save and view page</div>
<div class="t" style="left:408.80px;top:4.50px;font-size:5.6px;color:#444">Path: /Home/main menu/Blog/</div>
<svg class="a" style="left:486.60px;top:3.20px" width="5.2" height="6.8"><use href="#pg"/></svg>
<div class="t" style="left:493.60px;top:4.40px;font-size:5.8px;font-weight:bold;color:#222">Blog Two Col [44]</div>
<div class="a" style="left:496px;top:13px;width:14px;height:11px;background:#ececec;border:1px solid #dcdcdc;border-radius:1px"></div>
<div class="a" style="left:512px;top:13px;width:15px;height:11px;background:#ececec;border:1px solid #dcdcdc;border-radius:1px"></div>
<div class="a" style="left:528px;top:13px;width:15px;height:11px;background:#ececec;border:1px solid #dcdcdc;border-radius:1px"></div>
<svg class="a" style="left:500.30px;top:16.70px;overflow:visible" width="5" height="4.6" viewBox="0 0 10 9"><path d="M6 1.5 H1 V8.2 H8.5 V4.5" fill="none" stroke="#333" stroke-width="1.1"/><path d="M4.5 5 L9 0.8 M6.3 0.8 H9.2 V3.5" fill="none" stroke="#333" stroke-width="1.1"/></svg>
<svg class="a" style="left:517.30px;top:16.40px;overflow:visible" width="4" height="4.6" viewBox="0 0 8 9"><circle cx="6" cy="1.6" r="1.2" fill="#444"/><circle cx="2" cy="4.5" r="1.2" fill="#444"/><circle cx="6" cy="7.4" r="1.2" fill="#444"/><path d="M6 1.6 L2 4.5 L6 7.4" stroke="#444" stroke-width="0.8" fill="none"/></svg>
<div class="t" style="left:534.20px;top:17.20px;font-size:5px;font-weight:bold;color:#333">?</div>
<div class="t" style="left:10.40px;top:35.60px;font-size:10.75px;letter-spacing:-0.39px;color:#333">Edit Page &quot;Blog Two Col&quot;</div>
<div class="a" style="left:10px;top:57px;width:533px;height:12px;background:#ededed;border:1px solid #e2e2e2;border-bottom:none"></div>
<div class="a" style="left:10px;top:69px;width:533px;height:183px;background:#fafafa;border:1px solid #dedede"></div>
<div class="a" style="left:11px;top:173px;width:531px;height:1px;background:#e4e4e4"></div>
<div class="a" style="left:136px;top:56px;width:40px;height:14px;background:#fafafa;border:1px solid #e0e0e0;border-bottom:none"></div>
<div class="tab" style="left:15.00px;color:#3a3a3a">General</div>
<div class="tab" style="left:44.80px;color:#3a3a3a">SEO</div>
<div class="tab" style="left:66.00px;color:#3a3a3a">Social media</div>
<div class="tab" style="left:108.00px;color:#3a3a3a">Metadata</div>
<div class="tab" style="left:141.70px;color:#666">Appearance</div>
<div class="tab" style="left:180.90px;color:#3a3a3a">Behaviour</div>
<div class="tab" style="left:216.70px;color:#3a3a3a">Resources</div>
<div class="tab" style="left:252.00px;color:#3a3a3a">Language</div>
<div class="tab" style="left:286.90px;color:#3a3a3a">Access</div>
<div class="tab" style="left:314.20px;color:#3a3a3a">Categories</div>
<div class="tab" style="left:351.00px;color:#3a3a3a">Notes</div>
<div class="tab" style="left:376.00px;color:#3a3a3a">Search</div>
<div class="tab" style="left:403.90px;color:#3a3a3a">Advanced settings</div>
<div class="t" style="left:15.30px;top:75.50px;font-size:6.6px;letter-spacing:-0.05px;color:#444">Page Layout</div>
<div class="t" style="left:15.00px;top:87.10px;font-size:5.65px;font-weight:bold;color:#222">Frontend Layout</div>
<div class="a" style="left:15px;top:97px;width:42px;height:14px;background:#fff;border:1px solid #d9d9d9;border-radius:1px"></div>
<div class="t" style="left:20.40px;top:101.70px;font-size:5.3px;color:#555">Default</div>
<svg class="a" style="left:45.80px;top:102.80px;overflow:visible" width="4.6" height="2.8" viewBox="0 0 8 5"><path d="M1 1 L4 4 L7 1" fill="none" stroke="#333" stroke-width="1.5"/></svg>
<div class="t" style="left:281.00px;top:87.10px;font-size:5.65px;font-weight:bold;color:#222">Mark as 'New' Until</div>
<div class="a" style="left:281px;top:97px;width:82px;height:14px;background:#fff;border:1px solid #d9d9d9;border-radius:1px"></div>
<div class="a" style="left:346px;top:97px;width:17px;height:14px;background:#ececec;border:1px solid #d9d9d9;border-radius:0 1px 1px 0"></div>
<svg class="a" style="left:352.30px;top:101.50px;overflow:visible" width="4.6" height="4.6" viewBox="0 0 9 9"><rect x="0.6" y="1.2" width="7.8" height="7.2" fill="none" stroke="#333" stroke-width="1.1"/><rect x="0.6" y="1.2" width="7.8" height="1.8" fill="#333"/><path d="M2.5 0 V2 M6.5 0 V2" stroke="#333" stroke-width="0.9"/></svg>
<div class="t" style="left:15.00px;top:117.90px;font-size:5.65px;font-weight:bold;color:#222">Backend Layout (this page only)</div>
<div class="t" style="left:15.00px;top:126.90px;font-size:5.5px;color:#909090">This page is currently using backend layout &quot;Default&quot;, inherited from a parent page.</div>
<div class="a" style="left:15px;top:136px;width:257px;height:13px;background:#fff;border:1px solid #d9d9d9;border-radius:1px"></div>
<div class="a" style="left:15px;top:136px;width:17px;height:13px;background:#ececec;border:1px solid #d9d9d9;border-radius:1px 0 0 1px"></div>
<svg class="a" style="left:261.10px;top:140.80px;overflow:visible" width="4.6" height="2.8" viewBox="0 0 8 5"><path d="M1 1 L4 4 L7 1" fill="none" stroke="#333" stroke-width="1.5"/></svg>
<div class="a" style="left:15px;top:152px;width:257px;height:14px;background:#fff;border:1px solid #e0e0e0;border-radius:1px"></div>
<svg class="a" style="left:19.00px;top:155.60px;overflow:visible" width="5.2" height="6.6" viewBox="0 0 10 13"><path d="M0 0 H7 L10 3 V13 H0 Z" fill="#d0151e"/><rect x="0" y="7.2" width="10" height="1.3" fill="#fff"/><path d="M1.5 2 H5.5 M1.5 4.5 H7" stroke="#f07070" stroke-width="0.7"/></svg>
<div class="t" style="left:281.30px;top:117.90px;font-size:5.65px;font-weight:bold;color:#222">Backend Layout (subpages of this page)</div>
<div class="a" style="left:281px;top:129px;width:257px;height:13px;background:#fff;border:1px solid #d9d9d9;border-radius:1px"></div>
<div class="a" style="left:281px;top:129px;width:17px;height:13px;background:#ececec;border:1px solid #d9d9d9;border-radius:1px 0 0 1px"></div>
<svg class="a" style="left:526.60px;top:133.80px;overflow:visible" width="4.6" height="2.8" viewBox="0 0 8 5"><path d="M1 1 L4 4 L7 1" fill="none" stroke="#333" stroke-width="1.5"/></svg>
<div class="a" style="left:281px;top:145px;width:257px;height:14px;background:#fff;border:1px solid #e0e0e0;border-radius:1px"></div>
<svg class="a" style="left:285.20px;top:148.60px;overflow:visible" width="5.2" height="6.6" viewBox="0 0 10 13"><path d="M0 0 H7 L10 3 V13 H0 Z" fill="#d0151e"/><rect x="0" y="7.2" width="10" height="1.3" fill="#fff"/><path d="M1.5 2 H5.5 M1.5 4.5 H7" stroke="#f07070" stroke-width="0.7"/></svg>
<div class="t" style="left:15.00px;top:179.60px;font-size:6.6px;letter-spacing:-0.05px;color:#444">Replace Content</div>
<div class="t" style="left:15.00px;top:191.20px;font-size:5.65px;font-weight:bold;color:#222">Show Content from Page</div>
<div class="a" style="left:15px;top:199px;width:485px;height:13px;background:#fff;border:1px solid #d9d9d9;border-radius:1px"></div>
<div class="a" style="left:15px;top:199px;width:17px;height:13px;background:#ececec;border:1px solid #d9d9d9;border-radius:1px 0 0 1px"></div>
<svg class="a" style="left:21.40px;top:202.80px;overflow:visible" width="5" height="5" viewBox="0 0 10 10"><circle cx="4.2" cy="4.2" r="3.1" fill="none" stroke="#333" stroke-width="1.5"/><path d="M6.4 6.4 L9.2 9.2" stroke="#333" stroke-width="1.8"/></svg>
<div class="t" style="left:36.80px;top:203.40px;font-size:5.4px;color:#888">Find records</div>
<div class="a" style="left:15px;top:211px;width:485px;height:14px;background:#fff;border:1px solid #d9d9d9;border-radius:1px"></div>
<svg class="a" style="left:488.90px;top:216.60px;overflow:visible" width="4.6" height="2.8" viewBox="0 0 8 5"><path d="M1 1 L4 4 L7 1" fill="none" stroke="#333" stroke-width="1.5"/></svg>
<div class="a" style="left:501px;top:211px;width:18px;height:14px;background:#ebebeb;border:1px solid #d9d9d9;border-radius:1px"></div>
<svg class="a" style="left:507.60px;top:215.20px;overflow:visible" width="5" height="5.6" viewBox="0 0 10 11"><path d="M1 2.2 H9 M3.6 2 V0.8 H6.4 V2" fill="none" stroke="#666" stroke-width="1.1"/><path d="M2 3.2 H8 L7.4 10.2 H2.6 Z" fill="#777"/><path d="M4 4.4 V9 M6 4.4 V9" stroke="#ccc" stroke-width="0.6"/></svg>
<div class="a" style="left:520px;top:211px;width:18px;height:14px;background:#ebebeb;border:1px solid #d9d9d9;border-radius:1px"></div>
<svg class="a" style="left:525.80px;top:215.40px;overflow:visible" width="5.8" height="4.6" viewBox="0 0 12 9"><path d="M0.7 0.8 H4.5 L5.5 2 H11.3 V8.3 H0.7 Z M0.7 3 H11.3" fill="none" stroke="#444" stroke-width="1.1"/></svg>
<div class="a" style="left:15px;top:227px;width:30px;height:14px;background:#ececec;border:1px solid #d9d9d9;border-radius:1px"></div>
<svg class="a" style="left:21.50px;top:230.70px;overflow:visible" width="4.6" height="6" viewBox="0 0 10 13"><path d="M0.6 0.6 H6.4 L9.4 3.6 V12.4 H0.6 Z" fill="#fff" stroke="#777" stroke-width="0.9"/><path d="M6.4 0.6 V3.6 H9.4" fill="none" stroke="#777" stroke-width="0.9"/></svg>
<div class="t" style="left:28.50px;top:232.40px;font-size:4.7px;color:#444">Page</div>
<div class="a" style="left:0px;top:0px;width:1px;height:26px;background:#d8d8d8"></div>
<div class="a" style="left:0px;top:26px;width:1px;height:386px;background:#f4f4f4"></div>
<div class="a" style="left:-3px;top:26px;width:4px;height:321px;background:#efefef;border-right:1px solid #e0e0e0"></div>
<div class="a" style="left:-3px;top:167.80px;width:3px;height:8.4px;background:#fff;border-top:0.5px solid #e6e6e6;border-bottom:0.5px solid #e6e6e6"></div>
<svg class="a" style="left:509.20px;top:254.90px;overflow:visible" width="5.2" height="6.6" viewBox="0 0 10 12"><path d="M0.5 0.5 H6.5 L9.5 3.5 V11.5 H0.5 Z" fill="#d4d4d4"/><rect x="2" y="4" width="6" height="2" fill="#555"/></svg>
<div class="t" style="left:517.10px;top:255.60px;font-size:5.7px;font-weight:bold;color:#555">Page</div>
<div class="t" style="left:531.90px;top:255.60px;font-size:5.9px;color:#888">[44]</div>
</div>
</body></html>
